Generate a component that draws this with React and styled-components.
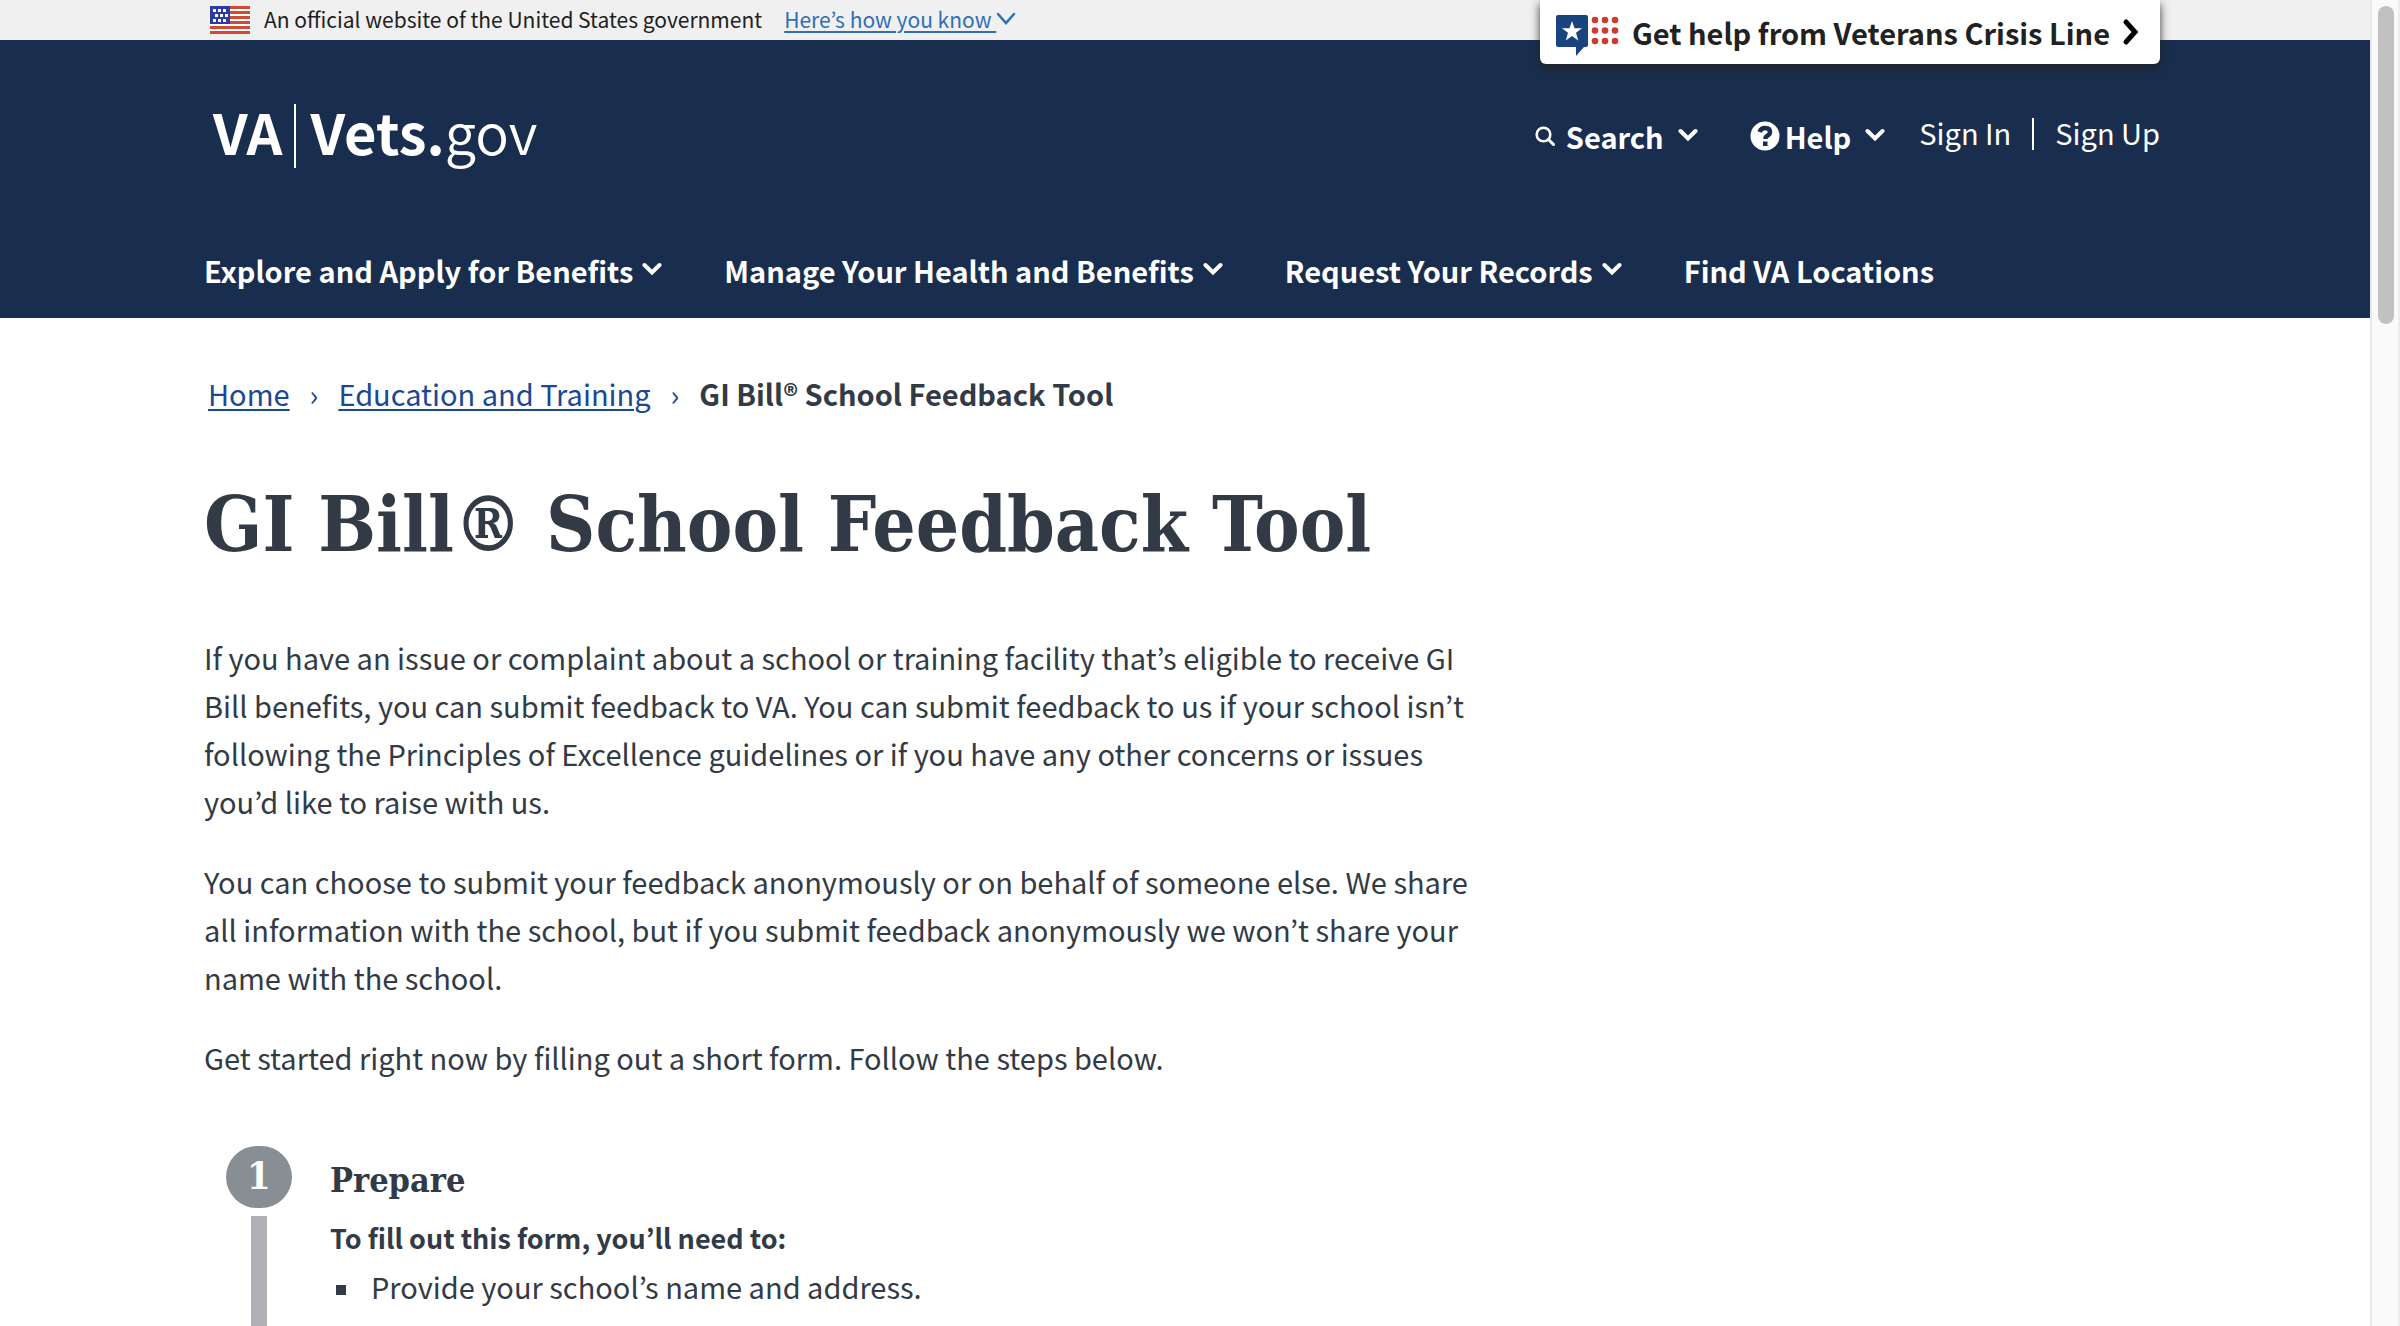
import React from "react";
import styled, { createGlobalStyle, css } from "styled-components";

const sans = `"Noto Sans CJK KR", "Noto Sans", sans-serif`;
const slab = `"DejaVu Serif Condensed", "DejaVu Serif", serif`;
const navy = "#192e4e";
const ink = "#323a45";

const GlobalStyle = createGlobalStyle`
  * { box-sizing: border-box; }
  body { margin: 0; background: #fff; font-family: ${sans}; font-size: 29px; line-height: 48px; color: ${ink}; }
  h1, h2, p, ul, ol { margin: 0; padding: 0; }
  button { font: inherit; color: inherit; background: none; border: 0; padding: 0; cursor: pointer; }
`;

const Shell = styled.div`
  display: grid;
  grid-template-columns: minmax(0, 1fr) 30px;
  height: 100vh;
  overflow: hidden;
`;

const Page = styled.div`
  overflow: hidden;
`;

const ScrollTrack = styled.div`
  background: #fafafa;
  border-left: 2px solid #e8e8e8;
  border-right: 2px solid #ededed;
  padding: 6px 4px 0 6px;
`;

const ScrollThumb = styled.div`
  height: 24vh;
  width: 16px;
  border-radius: 8px;
  background: #c1c1c1;
`;

const Container = styled.div`
  max-width: 2000px;
  margin: 0 auto;
  padding: 0 25px 0 19px;
`;

const Banner = styled.div`
  background: #f0f0f0;
`;

const BannerRow = styled(Container)`
  position: relative;
  display: flex;
  align-items: center;
  height: 40px;
  padding-left: 25px;
  font-size: 21px;
  line-height: 36px;
  color: #212121;

  svg { flex: none; }
`;

const BannerText = styled.span`
  margin: 0 22px 0 14px;
  padding-bottom: 3px;
`;

const BannerButton = styled.button`
  display: flex;
  align-items: center;
  padding-bottom: 3px;
  color: #2e6fb7;

  span {
    text-decoration: underline;
    text-decoration-thickness: 2px;
    text-underline-offset: 3px;
    white-space: pre;
  }
`;

const CrisisButton = styled.button`
  position: absolute;
  z-index: 1;
  top: 0;
  right: 25px;
  display: flex;
  align-items: center;
  justify-content: space-between;
  width: 620px;
  height: 64px;
  padding: 0 20px 0 16px;
  border-radius: 0 0 6px 6px;
  background: #fff;
  box-shadow: 0 4px 10px rgba(33, 33, 33, 0.9);
  font-weight: 700;
  font-size: 29px;
  color: #212121;
`;

const Masthead = styled.header`
  background: ${navy};
  color: #fff;
`;

const MastheadTop = styled(Container)`
  display: flex;
  justify-content: space-between;
  align-items: flex-start;
  height: 184px;
`;

const Logo = styled.a`
  display: flex;
  align-items: flex-start;
  margin: 64px 0 0 9px;
  color: #fff;
  text-decoration: none;
  font-size: 56px;
  line-height: 54px;
  font-weight: 700;
`;

const LogoDivider = styled.span`
  width: 2px;
  height: 64px;
  margin: 0 15px 0 11px;
  background: #fff;
`;

const LogoLight = styled.span`
  font-weight: 350;
`;

const Tools = styled.div`
  display: flex;
  align-items: center;
  margin-top: 64px;
`;

const ToolButton = styled.button`
  display: flex;
  align-items: center;
  gap: ${(p) => p.$gap}px;
  margin-right: ${(p) => p.$after}px;
  padding-top: 8px;
  font-weight: 700;

  svg:last-child { margin-left: ${(p) => 14 - p.$gap}px; }
`;

const SignLink = styled.a`
  color: #fff;
  text-decoration: none;
`;

const SignDivider = styled.span`
  width: 2px;
  height: 32px;
  margin: 4px 21px 0;
  background: #fff;
`;

const Nav = styled(Container).attrs({ as: "nav" })`
  display: flex;
  gap: 62px;
  height: 94px;
  padding-top: 22px;
`;

const navItem = css`
  display: flex;
  align-items: center;
  gap: 9px;
  height: 48px;
  font-weight: 700;
`;

const NavButton = styled.button`${navItem}`;

const NavLink = styled.a`
  ${navItem}
  color: #fff;
  text-decoration: none;
`;

const Breadcrumb = styled.ol`
  display: flex;
  align-items: center;
  gap: 20px;
  padding: 51px 0 0 4px;
  list-style: none;

  a {
    color: #1c4792;
    text-decoration: underline;
    text-decoration-thickness: 2px;
    text-underline-offset: 3px;
  }
`;

const Separator = styled.li`
  color: #1c4792;
`;

const Current = styled.li`
  font-weight: 700;
`;

const Article = styled.div`
  max-width: 1272px;
`;

const Title = styled.h1`
  padding: 60px 0;
  font-family: ${slab};
  font-size: 76px;
  line-height: 96px;
  font-weight: 700;
  white-space: nowrap;
`;

const Paragraph = styled.p`
  margin-bottom: 32px;
`;

const Steps = styled.ol`
  list-style: none;
  padding: 33px 0 0 22px;
`;

const Step = styled.li`
  display: grid;
  grid-template-columns: 66px 1fr;
  column-gap: 38px;
`;

const StepRail = styled.div`
  display: flex;
  flex-direction: column;
  align-items: center;
  gap: 8px;
  min-height: 400px;

  &::after {
    content: "";
    flex: 1;
    width: 16px;
    background: #aeb0b5;
  }
`;

const StepNumber = styled.span`
  width: 66px;
  height: 62px;
  border-radius: 31px;
  background: #878f95;
  color: #fff;
  font-family: ${slab};
  font-size: 38px;
  line-height: 60px;
  font-weight: 700;
  text-align: center;
`;

const StepTitle = styled.h2`
  padding: 10px 0;
  font-family: ${slab};
  font-size: 34px;
  line-height: 48px;
  font-weight: 700;
`;

const StepLead = styled.p`
  font-size: 27px;
  font-weight: 700;
`;

const StepList = styled.ul`
  list-style: none;

  li {
    display: flex;
    align-items: center;
    gap: 25px;
    padding-left: 6px;
  }

  li::before {
    content: "";
    width: 10px;
    height: 10px;
    margin-top: 8px;
    background: ${ink};
  }
`;

const Chevron = ({ size = 20, stroke = 4, color = "#fff" }) => (
  <svg width={size} height={size} viewBox="0 0 20 20" aria-hidden="true">
    <path d="M2.5 5 L10 12.500 L17.5 5" fill="none" stroke={color} strokeWidth={stroke} strokeLinecap="round" />
  </svg>
);

const Flag = () => (
  <svg width="40" height="28" viewBox="0 0 40 28" role="img" aria-label="U.S. flag">
    <rect width="40" height="28" fill="#fff" />
    {[0, 5, 10, 15, 20, 25].map((y) => (
      <rect key={y} y={y} width="40" height="3" fill="#d04a35" />
    ))}
    <rect width="20" height="18" fill="#2a3ba8" />
    {[3, 8, 13].map((y, row) =>
      [3, 8, 13].map((x) => <rect key={`${x}-${y}`} x={x + (row % 2) * 2} y={y} width="3" height="3" fill="#fff" />)
    )}
  </svg>
);

const CrisisMark = () => (
  <svg width="64" height="50" viewBox="0 -8 64 50" aria-hidden="true">
    <path d="M2 0 H30 Q32 0 32 2 V30 Q32 32 30 32 H28 L20 41 V32 H2 Q0 32 0 30 V2 Q0 0 2 0Z" fill="#1a4480" />
    <path d="M16 6 L18.5 13.2 H26 L20 17.800 L22.2 25.500 L16 21 L9.8 25.500 L12 17.800 L6 13.200 H13.5Z" fill="#fff" />
    {[5, 15.5, 26].map((y) => [39, 49, 59].map((x) => <circle key={`${x}-${y}`} cx={x} cy={y} r="3.3" fill="#cf3a2c" />))}
  </svg>
);

export default function App() {
  return (
    <>
      <GlobalStyle />
      <Shell>
        <Page>
          <Banner>
            <BannerRow>
              <Flag />
              <BannerText>An official website of the United States government</BannerText>
              <BannerButton>
                <span>Here’s how you know </span>
                <svg width="20" height="20" viewBox="0 0 20 20" aria-hidden="true">
                  <path d="M2 5 L10 14 L18 5" fill="none" stroke="#2e6fb7" strokeWidth="2.5" strokeLinecap="round" />
                </svg>
              </BannerButton>
              <CrisisButton>
                <CrisisMark />
                <span>Get help from Veterans Crisis Line</span>
                <svg width="18" height="28" viewBox="0 0 18 28" aria-hidden="true">
                  <path d="M4 4 L13 14 L4 24" fill="none" stroke="#000" strokeWidth="5" strokeLinecap="round" />
                </svg>
              </CrisisButton>
            </BannerRow>
          </Banner>
          <Masthead>
            <MastheadTop>
              <Logo href="#">
                <span>VA</span>
                <LogoDivider />
                <span>Vets.<LogoLight>gov</LogoLight></span>
              </Logo>
              <Tools>
                <ToolButton $gap={11} $after={52}>
                  <svg width="20" height="20" viewBox="0 0 20 20" aria-hidden="true">
                    <circle cx="8.5" cy="8.5" r="6.8" fill="none" stroke="#fff" strokeWidth="2.6" />
                    <path d="M13.5 13.5 L18.5 18.5" stroke="#fff" strokeWidth="3" strokeLinecap="round" />
                  </svg>
                  Search
                  <Chevron />
                </ToolButton>
                <ToolButton $gap={5} $after={34}>
                  <svg width="30" height="30" viewBox="0 0 30 30" aria-hidden="true">
                    <circle cx="15" cy="15" r="14.5" fill="#fff" />
                    <path d="M9.500 11 Q11 7 15 7 Q20 7 20 11 Q20 13.500 17 15 Q15.300 16 15.300 18" fill="none" stroke={navy} strokeWidth="4.500" />
                    <rect x="13" y="20.500" width="4.500" height="4.500" fill={navy} />
                  </svg>
                  Help
                  <Chevron />
                </ToolButton>
                <SignLink href="#">Sign In</SignLink>
                <SignDivider />
                <SignLink href="#">Sign Up</SignLink>
              </Tools>
            </MastheadTop>
            <Nav>
              <NavButton>Explore and Apply for Benefits <Chevron /></NavButton>
              <NavButton>Manage Your Health and Benefits <Chevron /></NavButton>
              <NavButton>Request Your Records <Chevron /></NavButton>
              <NavLink href="#">Find VA Locations</NavLink>
            </Nav>
          </Masthead>
          <Container as="main">
            <Breadcrumb>
              <li><a href="#">Home</a></li>
              <Separator>›</Separator>
              <li><a href="#">Education and Training</a></li>
              <Separator>›</Separator>
              <Current>GI Bill® School Feedback Tool</Current>
            </Breadcrumb>
            <Article>
              <Title>GI Bill® School Feedback Tool</Title>
              <Paragraph>
                If you have an issue or complaint about a school or training facility that’s eligible to receive GI Bill
                benefits, you can submit feedback to VA. You can submit feedback to us if your school isn’t following the
                Principles of Excellence guidelines or if you have any other concerns or issues you’d like to raise with us.
              </Paragraph>
              <Paragraph>
                You can choose to submit your feedback anonymously or on behalf of someone else. We share all information
                with the school, but if you submit feedback anonymously we won’t share your name with the school.
              </Paragraph>
              <Paragraph>Get started right now by filling out a short form. Follow the steps below.</Paragraph>
              <Steps>
                <Step>
                  <StepRail><StepNumber>1</StepNumber></StepRail>
                  <div>
                    <StepTitle>Prepare</StepTitle>
                    <StepLead>To fill out this form, you’ll need to:</StepLead>
                    <StepList>
                      <li>Provide your school’s name and address.</li>
                    </StepList>
                  </div>
                </Step>
              </Steps>
            </Article>
          </Container>
        </Page>
        <ScrollTrack>
          <ScrollThumb />
        </ScrollTrack>
      </Shell>
    </>
  );
}
